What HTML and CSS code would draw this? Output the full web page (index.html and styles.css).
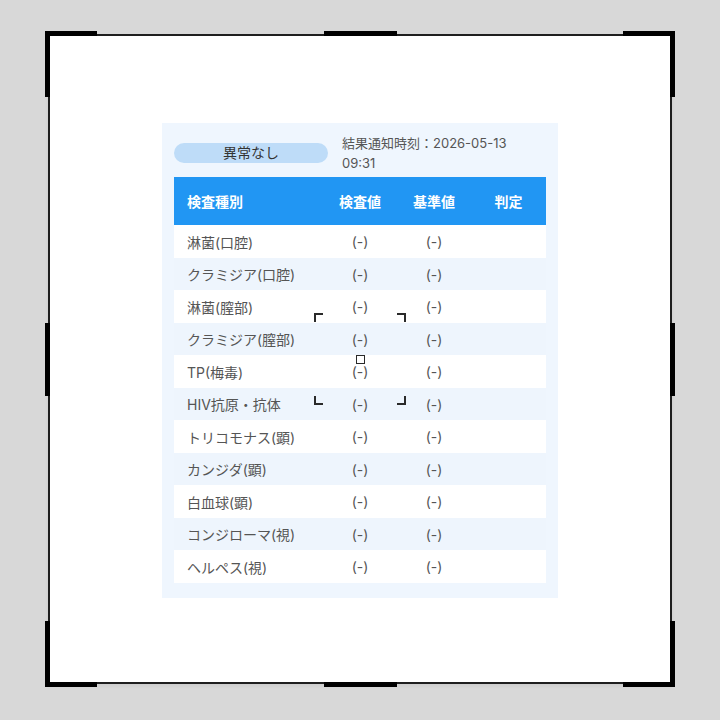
FILE: index.html
```html
<!DOCTYPE html>
<html lang="ja">
<head>
<meta charset="utf-8">
<title>検査結果</title>
<link rel="stylesheet" href="styles.css">
</head>
<body>
<div class="frame">
  <div class="card">
    <div class="top">
      <div class="pill">異常なし</div>
      <div class="time">結果通知時刻：2026-05-13 09:31</div>
    </div>
    <div class="table">
      <div class="row head"><span class="c1">検査種別</span><span class="c">検査値</span><span class="c">基準値</span><span class="c">判定</span></div>
      <div class="row"><span class="c1">淋菌(口腔)</span><span class="c">(-)</span><span class="c">(-)</span><span class="c"></span></div>
      <div class="row alt"><span class="c1">クラミジア(口腔)</span><span class="c">(-)</span><span class="c">(-)</span><span class="c"></span></div>
      <div class="row"><span class="c1">淋菌(膣部)</span><span class="c">(-)</span><span class="c">(-)</span><span class="c"></span></div>
      <div class="row alt"><span class="c1">クラミジア(膣部)</span><span class="c">(-)</span><span class="c">(-)</span><span class="c"></span></div>
      <div class="row"><span class="c1">TP(梅毒)</span><span class="c">(-)</span><span class="c">(-)</span><span class="c"></span></div>
      <div class="row alt"><span class="c1">HIV抗原・抗体</span><span class="c">(-)</span><span class="c">(-)</span><span class="c"></span></div>
      <div class="row"><span class="c1">トリコモナス(顕)</span><span class="c">(-)</span><span class="c">(-)</span><span class="c"></span></div>
      <div class="row alt"><span class="c1">カンジダ(顕)</span><span class="c">(-)</span><span class="c">(-)</span><span class="c"></span></div>
      <div class="row"><span class="c1">白血球(顕)</span><span class="c">(-)</span><span class="c">(-)</span><span class="c"></span></div>
      <div class="row alt"><span class="c1">コンジローマ(視)</span><span class="c">(-)</span><span class="c">(-)</span><span class="c"></span></div>
      <div class="row"><span class="c1">ヘルペス(視)</span><span class="c">(-)</span><span class="c">(-)</span><span class="c"></span></div>
    </div>
  </div>

  <span class="h h-tl"></span>
  <span class="h h-tr"></span>
  <span class="h h-bl"></span>
  <span class="h h-br"></span>
  <span class="m m-t"></span>
  <span class="m m-b"></span>
  <span class="m m-l"></span>
  <span class="m m-r"></span>

  <div class="focus">
    <span class="f f-tl"></span>
    <span class="f f-tr"></span>
    <span class="f f-bl"></span>
    <span class="f f-br"></span>
    <span class="dot"></span>
  </div>
</div>
</body>
</html>
```

FILE: styles.css
```css
* { box-sizing: border-box; }
html, body { margin: 0; padding: 0; }
body {
  width: 720px;
  height: 720px;
  background: #d8d8d8;
  display: flex;
  justify-content: center;
  padding-top: 34px;
  font-family: Inter, "Noto Sans CJK JP", sans-serif;
}
.frame {
  position: relative;
  width: 624px;
  height: 650px;
  border: 2px solid #1e1e1e;
  background: #fff;
  display: flex;
  align-items: center;
  justify-content: center;
  box-shadow: 0 2px 4px rgba(0,0,0,0.06);
}
.card {
  width: 396px;
  margin-top: 3px;
  background: #eff6fe;
  padding: 10px 12px 15px;
}
.top {
  display: flex;
  align-items: center;
  gap: 14px;
  margin-bottom: 4px;
}
.pill {
  flex: 0 0 154px;
  height: 20px;
  border-radius: 10px;
  background: #bedcf8;
  color: #333;
  font-size: 14px;
  line-height: 20px;
  text-align: center;
}
.time {
  flex: 1;
  padding-right: 12px;
  font-size: 13px;
  line-height: 20px;
  color: #555;
}
.row {
  display: grid;
  grid-template-columns: 149px 74px 74px 75px;
  height: 32.5px;
  align-items: center;
  background: #fff;
  font-size: 14px;
  color: #555;
}
.row.alt { background: #eef5fd; }
.row.head {
  height: 48px;
  background: #2196f3;
  color: #fff;
  font-weight: 600;
}
.c1 { padding-left: 13px; white-space: nowrap; }
.c { text-align: center; }

.h {
  position: absolute;
  width: 52px;
  height: 66px;
  border: 0 solid #000;
}
.h-tl { left: -5px; top: -5px; border-top-width: 5px; border-left-width: 5px; }
.h-tr { right: -5px; top: -5px; border-top-width: 5px; border-right-width: 5px; }
.h-bl { left: -5px; bottom: -5px; border-bottom-width: 5px; border-left-width: 5px; }
.h-br { right: -5px; bottom: -5px; border-bottom-width: 5px; border-right-width: 5px; }
.m { position: absolute; background: #000; }
.m-t { top: -5px; left: calc(50% - 36.5px); width: 73px; height: 5px; }
.m-b { bottom: -5px; left: calc(50% - 36.5px); width: 73px; height: 5px; }
.m-l { left: -5px; top: calc(50% - 36.5px); width: 5px; height: 73px; }
.m-r { right: -5px; top: calc(50% - 36.5px); width: 5px; height: 73px; }

.focus {
  position: absolute;
  left: calc(50% - 46px);
  top: calc(50% - 46px);
  width: 92px;
  height: 92px;
}
.f {
  position: absolute;
  width: 9px;
  height: 9px;
  border: 0 solid #2a2a2a;
}
.f-tl { left: 0; top: 0; border-top-width: 2px; border-left-width: 2px; }
.f-tr { right: 0; top: 0; border-top-width: 2px; border-right-width: 2px; }
.f-bl { left: 0; bottom: 0; border-bottom-width: 2px; border-left-width: 2px; }
.f-br { right: 0; bottom: 0; border-bottom-width: 2px; border-right-width: 2px; }
.dot {
  position: absolute;
  left: 41.5px;
  top: 41.5px;
  width: 9px;
  height: 9px;
  border: 1.5px solid #2a2a2a;
}
```
